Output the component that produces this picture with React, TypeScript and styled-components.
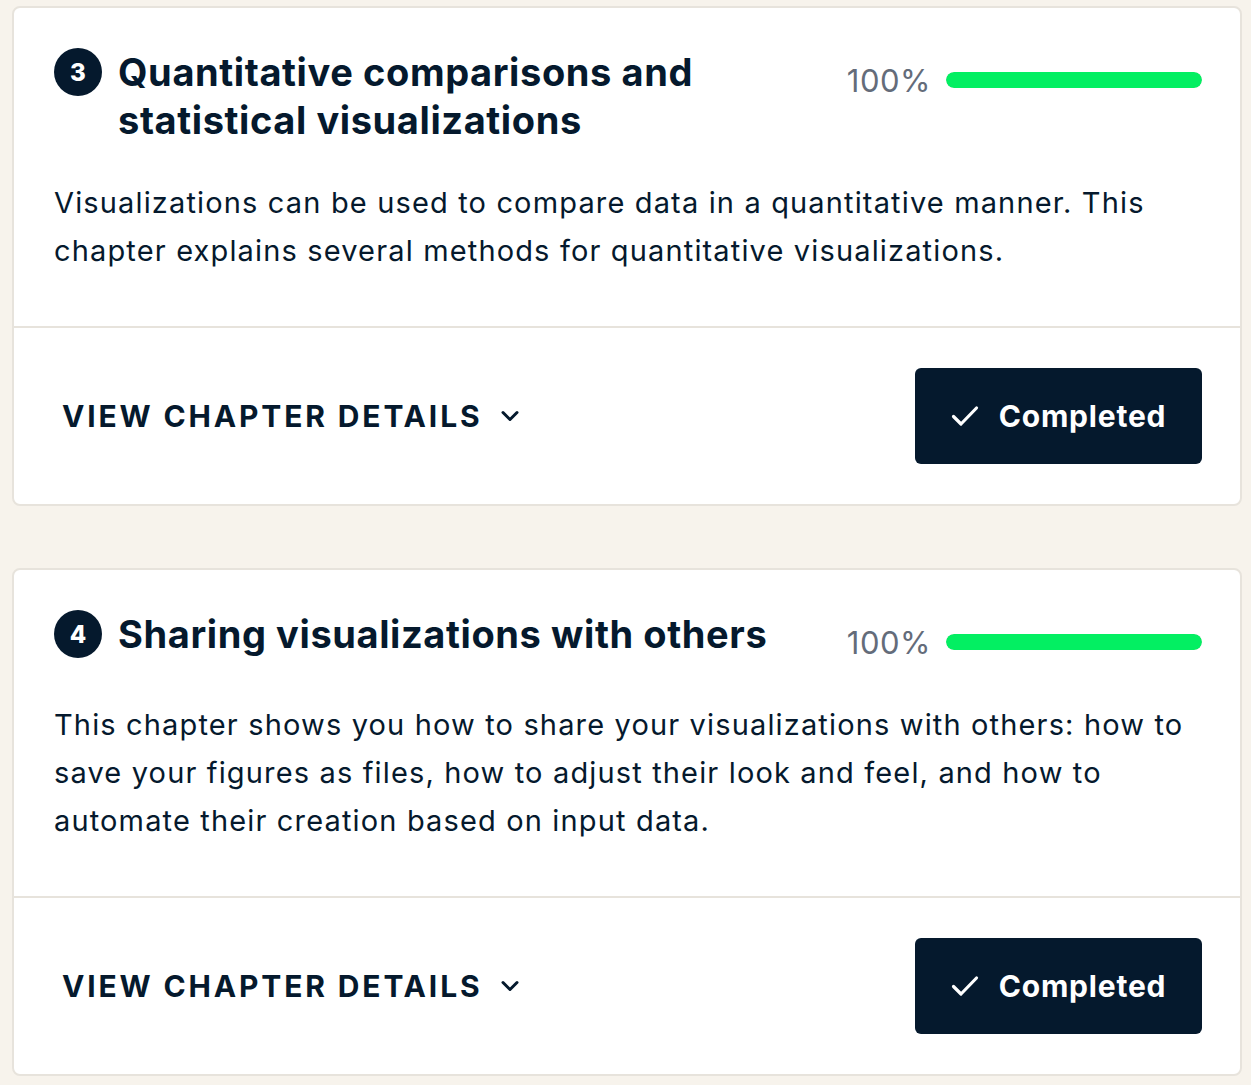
import React from "react";
import styled, { createGlobalStyle } from "styled-components";

const Global = createGlobalStyle`
  html, body { margin: 0; padding: 0; background: #f7f3ec; }
  body { font-family: Inter, "Noto Sans", sans-serif; color: #05192d; }
`;

const Page = styled.div`
  display: flex;
  flex-direction: column;
  gap: 62px;
  padding: 6px 9px 20px 12px;
`;

const Card = styled.section`
  background: #fff;
  border: 2px solid #e7e3dc;
  border-radius: 8px;
  display: flex;
  flex-direction: column;
`;

const Top = styled.div`
  padding: 40px 38px 51px 40px;
  border-bottom: 2px solid #e7e3dc;
`;

const Header = styled.div`
  display: flex;
  align-items: flex-start;
  gap: 16px;
`;

const Badge = styled.div`
  flex: 0 0 48px;
  width: 48px;
  height: 48px;
  border-radius: 50%;
  background: #05192d;
  color: #fff;
  font-weight: 800;
  font-size: 24px;
  display: flex;
  align-items: center;
  justify-content: center;
`;

const Title = styled.h3`
  margin: 0;
  flex: 1;
  font-size: 38px;
  line-height: 48px;
  font-weight: 700;
  letter-spacing: 0.6px;
  color: #05192d;
`;

const Progress = styled.div`
  flex: 0 0 auto;
  display: flex;
  align-items: center;
  gap: 15px;
  height: 48px;
  margin-top: 8px;
  margin-left: 40px;
`;

const Percent = styled.span`
  font-size: 31px;
  font-weight: 400;
  letter-spacing: 0.5px;
  color: #646c7a;
`;

const Track = styled.div`
  width: 256px;
  height: 16px;
  border-radius: 8px;
  background: #e7e3dc;
  overflow: hidden;
`;

const Fill = styled.div`
  height: 100%;
  border-radius: 8px;
  background: #03ef62;
`;

const Desc = styled.p`
  margin: 35px 0 0 0;
  font-size: 29px;
  line-height: 48px;
  font-weight: 400;
  letter-spacing: 1.15px;
  color: #05192d;
`;

const Bottom = styled.div`
  padding: 40px 38px 40px 40px;
  display: flex;
  align-items: center;
  justify-content: space-between;
`;

const DetailsToggle = styled.button`
  border: none;
  background: none;
  padding: 0 0 0 8px;
  display: flex;
  align-items: center;
  gap: 18px;
  font-family: inherit;
  font-size: 30px;
  font-weight: 700;
  letter-spacing: 2.85px;
  text-transform: uppercase;
  color: #05192d;
`;

const CompletedButton = styled.button`
  width: 287px;
  height: 96px;
  border: none;
  border-radius: 6px;
  background: #05192d;
  color: #fff;
  display: flex;
  align-items: center;
  justify-content: center;
  gap: 20px;
  padding-left: 6px;
  font-family: inherit;
  font-size: 30px;
  font-weight: 700;
  letter-spacing: 0.8px;
`;

const Chevron = () => (
  <svg width="20" height="14" viewBox="0 0 20 14" fill="none">
    <path d="M3 3.5 L10 10.5 L17 3.5" stroke="#05192d" strokeWidth="3" strokeLinecap="round" strokeLinejoin="round" />
  </svg>
);

const Check = () => (
  <svg width="28" height="22" viewBox="0 0 28 22" fill="none">
    <path d="M2.5 11.5 L10 19 L25.5 3" stroke="#fff" strokeWidth="3.2" strokeLinecap="round" strokeLinejoin="round" />
  </svg>
);

type Chapter = { num: number; title: string; desc: string; progress: number };

const chapters: Chapter[] = [
  {
    num: 3,
    title: "Quantitative comparisons and statistical visualizations",
    desc: "Visualizations can be used to compare data in a quantitative manner. This chapter explains several methods for quantitative visualizations.",
    progress: 100,
  },
  {
    num: 4,
    title: "Sharing visualizations with others",
    desc: "This chapter shows you how to share your visualizations with others: how to save your figures as files, how to adjust their look and feel, and how to automate their creation based on input data.",
    progress: 100,
  },
];

const ChapterCard = ({ c }: { c: Chapter }) => (
  <Card>
    <Top>
      <Header>
        <Badge>{c.num}</Badge>
        <Title>{c.title}</Title>
        <Progress>
          <Percent>{c.progress}%</Percent>
          <Track>
            <Fill style={{ width: `${c.progress}%` }} />
          </Track>
        </Progress>
      </Header>
      <Desc>{c.desc}</Desc>
    </Top>
    <Bottom>
      <DetailsToggle>
        View chapter details
        <Chevron />
      </DetailsToggle>
      <CompletedButton>
        <Check />
        Completed
      </CompletedButton>
    </Bottom>
  </Card>
);

export default function App() {
  return (
    <>
      <Global />
      <Page>
        {chapters.map((c) => (
          <ChapterCard key={c.num} c={c} />
        ))}
      </Page>
    </>
  );
}
